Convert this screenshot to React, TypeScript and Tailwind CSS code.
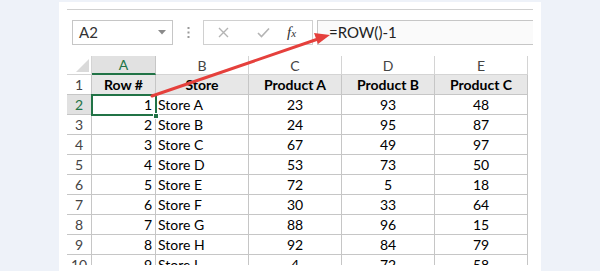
import React from "react";

const cols = [
    { key: "A", w: "w-[64px]" },
    { key: "B", w: "w-[93px]" },
    { key: "C", w: "w-[93px]" },
    { key: "D", w: "w-[93px]" },
    { key: "E", w: "w-[93px]" },
];

const rows = [
    [1, "Store A", 23, 93, 48],
    [2, "Store B", 24, 95, 87],
    [3, "Store C", 67, 49, 97],
    [4, "Store D", 53, 73, 50],
    [5, "Store E", 72, 5, 18],
    [6, "Store F", 30, 33, 64],
    [7, "Store G", 88, 96, 15],
    [8, "Store H", 92, 84, 79],
    [9, "Store I", 4, 72, 58],
];

const font = { fontFamily: "Lato, 'Liberation Sans', sans-serif" };

export default function App() {
    return (
        <div className="relative h-[271px] w-[600px] overflow-hidden bg-[#eef2f9]" style={font}>
            <div className="ml-[59px] mt-[2px] h-[269px] w-[482px] bg-white px-2">
                {/* ribbon edge */}
                <div className="pt-[7px]">
                    <div className="h-px bg-[#d0d0d0]" />
                </div>

                {/* formula bar */}
                <div className="mt-[10px] flex h-[25px] items-stretch">
                    <div className="ml-[5px] flex w-[101px] items-center justify-between border border-[#c6c6c6] bg-white pl-[6px] pr-[6px]">
                        <span className="text-[15px] text-[#333]">A2</span>
                        <svg width="8" height="5" viewBox="0 0 8 5">
                            <path d="M0 0 H8 L4 4.5 Z" fill="#8a8a8a" />
                        </svg>
                    </div>
                    <div className="flex w-[30px] items-center justify-center">
                        <svg width="3" height="11" viewBox="0 0 3 11">
                            <rect x="0.5" y="0" width="2" height="2" fill="#9a9a9a" />
                            <rect x="0.5" y="4.5" width="2" height="2" fill="#9a9a9a" />
                            <rect x="0.5" y="9" width="2" height="2" fill="#9a9a9a" />
                        </svg>
                    </div>
                    <div className="flex w-[110px] items-center border border-[#d0d0d0] bg-white">
                        <svg className="ml-[14px]" width="11" height="11" viewBox="0 0 11 11">
                            <path d="M1 1 L10 10 M10 1 L1 10" stroke="#b4b4b4" strokeWidth="1.4" />
                        </svg>
                        <svg className="ml-[28px]" width="13" height="11" viewBox="0 0 13 11">
                            <path d="M1 6 L4.5 9.5 L12 1.5" stroke="#b4b4b4" strokeWidth="1.6" fill="none" />
                        </svg>
                        <span
                            className="ml-[17px] text-[15px] italic text-[#333]"
                            style={{ fontFamily: "'Liberation Serif', serif" }}
                        >
                            f<span className="text-[11px]">x</span>
                        </span>
                    </div>
                    <div className="ml-[4px] flex flex-1 items-center border-y border-[#c6c6c6] border-l bg-[#fafafa] pl-[11px]">
                        <span className="text-[15px] text-[#222]">=ROW()-1</span>
                    </div>
                </div>

                {/* grid */}
                <div className="mt-[11px] h-[209px] overflow-hidden text-[14px] text-black">
                    {/* column letters */}
                    <div className="flex h-[19px]">
                        <div className="relative w-[25px] border-r border-b border-[#d4d4d4] bg-white">
                            <svg className="absolute bottom-[2px] right-[2px]" width="13" height="13" viewBox="0 0 13 13">
                                <path d="M13 0 V13 H0 Z" fill="#dadada" />
                            </svg>
                        </div>
                        {cols.map((c) =>
                            c.key === "A" ? (
                                <div
                                    key={c.key}
                                    className={`${c.w} flex items-center justify-center border-r border-b-2 border-r-[#c6c6c6] border-b-[#217346] bg-[#e1e1e1] text-[14px] text-[#217346]`}
                                >
                                    {c.key}
                                </div>
                            ) : (
                                <div
                                    key={c.key}
                                    className={`${c.w} flex items-center justify-center border-r border-b border-[#d4d4d4] bg-white text-[14px] text-[#444]`}
                                >
                                    {c.key}
                                </div>
                            )
                        )}
                    </div>

                    {/* row 1 headings */}
                    <div className="flex h-[20px]">
                        <div className="flex w-[25px] items-center justify-center border-r border-b border-[#c6c6c6] bg-white text-[#444]">
                            1
                        </div>
                        {["Row #", "Store", "Product A", "Product B", "Product C"].map((h, i) => (
                            <div
                                key={h}
                                className={`${cols[i].w} flex items-center justify-center border-r border-b border-[#c6c6c6] bg-[#e7e7e7] font-bold`}
                            >
                                {h}
                            </div>
                        ))}
                    </div>

                    {rows.map((r, idx) => {
                        const n = idx + 2;
                        const active = n === 2;
                        return (
                            <div key={n} className="flex h-[20px]">
                                <div
                                    className={`flex w-[25px] items-center justify-center border-r border-b border-[#c6c6c6] ${
                                        active ? "bg-[#e1e1e1] text-[#217346]" : "bg-white text-[#444]"
                                    }`}
                                >
                                    {n}
                                </div>
                                <div className="flex w-[64px] items-center justify-end border-r border-b border-[#c6c6c6] pr-[3px]">
                                    {r[0]}
                                </div>
                                <div className="flex w-[93px] items-center border-r border-b border-[#c6c6c6] pl-[2px]">
                                    {r[1]}
                                </div>
                                {[r[2], r[3], r[4]].map((v, j) => (
                                    <div
                                        key={j}
                                        className="flex w-[93px] items-center justify-center border-r border-b border-[#c6c6c6]"
                                    >
                                        {v}
                                    </div>
                                ))}
                            </div>
                        );
                    })}
                </div>
            </div>

            {/* active cell selection */}
            <div className="pointer-events-none absolute left-[91px] top-[94px] h-[22px] w-[66px] border-2 border-[#217346]" />
            <div className="pointer-events-none absolute left-[153px] top-[113px] h-[6px] w-[6px] border border-white bg-[#217346]" />

            {/* red arrow */}
            <svg className="pointer-events-none absolute left-0 top-0" width="600" height="271" viewBox="0 0 600 271">
                <path d="M152 96 L318 39" stroke="#e5403c" strokeWidth="3" strokeLinecap="round" />
                <path d="M330 35 L314 33 L318 44 Z" fill="#e5403c" />
            </svg>
        </div>
    );
}
